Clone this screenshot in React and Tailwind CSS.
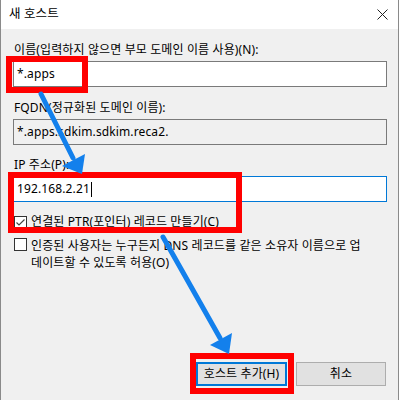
const font = "font-['Noto_Sans','Noto_Sans_CJK_KR',sans-serif]";

function Field({ value, readOnly, focused, caret }) {
  return (
    <div
      className={
        "flex h-[26px] w-[374px] items-center pl-[3px] text-[12px] text-black " +
        (focused ? "border border-[#0078d7] bg-white " : readOnly ? "border border-[#7a7a7a] bg-[#f0f0f0] " : "border border-[#7a7a7a] bg-white ")
      }
    >
      <span>{value}</span>
      {caret && <span className="ml-px h-[15px] w-px bg-black" />}
    </div>
  );
}

function Checkbox({ checked }) {
  return (
    <div className="flex h-[13px] w-[13px] shrink-0 items-center justify-center border border-[#333] bg-white">
      {checked && (
        <svg width="11" height="11" viewBox="0 0 11 11">
          <polyline points="1.5,5.5 4,8 9.5,2.5" fill="none" stroke="#444" strokeWidth="1.2" />
        </svg>
      )}
    </div>
  );
}

export default function App() {
  return (
    <div className={"relative flex h-[400px] w-[399px] flex-col overflow-hidden border-x border-[#8a8a8a] bg-[#f0f0f0] text-[12px] tracking-[0.12px] text-black " + font}>
      {/* title bar */}
      <div className="flex h-[29px] shrink-0 items-center justify-between bg-white pl-[8px] pr-[10px]">
        <span className="text-[12.5px]">새 호스트</span>
        <svg width="11" height="11" viewBox="0 0 11 11">
          <path d="M0.5 0.5 L10.5 10.5 M10.5 0.5 L0.5 10.5" stroke="#222" strokeWidth="1" />
        </svg>
      </div>

      <div className="flex flex-1 flex-col pl-[12px] pt-[13px]">
        <div className="flex flex-col gap-[3px]">
          <label className="pl-px leading-[16px]">이름(입력하지 않으면 부모 도메인 이름 사용)(N):</label>
          <Field value="*.apps" />
        </div>

        <div className="mt-[13px] flex flex-col gap-[3px]">
          <label className="pl-px leading-[16px]">FQDN(정규화된 도메인 이름):</label>
          <Field value="*.apps.sdkim.sdkim.reca2." readOnly />
        </div>

        <div className="mt-[12px] flex flex-col gap-[3px]">
          <label className="pl-px leading-[16px]">IP 주소(P):</label>
          <Field value="192.168.2.21" focused caret />
        </div>

        <div className="mt-[12px] flex items-center gap-[4px] pl-px">
          <Checkbox checked />
          <span className="leading-[16px]">연결된 PTR(포인터) 레코드 만들기(C)</span>
        </div>

        <div className="mt-[7px] flex items-start gap-[4px] pl-px">
          <div className="pt-[1px]">
            <Checkbox />
          </div>
          <span className="whitespace-nowrap leading-[17px]">
            인증된 사용자는 누구든지 DNS 레코드를 같은 소유자 이름으로 업
            <br />
            데이트할 수 있도록 허용(O)
          </span>
        </div>

        <div className="mt-auto mb-[14px] flex justify-end gap-[9px] pr-[12px]">
          <button className="h-[24px] w-[91px] border-2 border-[#0078d7] bg-[#e1e1e1] text-[12px]">호스트 추가(H)</button>
          <button className="h-[24px] w-[90px] border border-[#adadad] bg-[#e1e1e1] text-[12px]">취소</button>
        </div>
      </div>

      {/* annotations */}
      <div className="absolute left-[5px] top-[56px] h-[37px] w-[82px] border-[6px] border-[#ff0000]" />
      <div className="absolute left-[7px] top-[172px] h-[61px] w-[234px] border-[6px] border-[#ff0000]" />
      <div className="absolute left-[189px] top-[353px] h-[41px] w-[104px] border-[6px] border-[#ff0000]" />

      <svg className="absolute left-0 top-0" width="399" height="400" viewBox="0 0 399 400">
        <g stroke="#1380ec" strokeWidth="5" strokeLinecap="round">
          <line x1="40" y1="94" x2="72" y2="158" />
          <line x1="162" y1="237" x2="219" y2="338" />
        </g>
        <g fill="#1380ec">
          <polygon points="81,174 84,154 61,166" />
          <polygon points="228,354 231,333 209,345" />
        </g>
      </svg>
    </div>
  );
}
